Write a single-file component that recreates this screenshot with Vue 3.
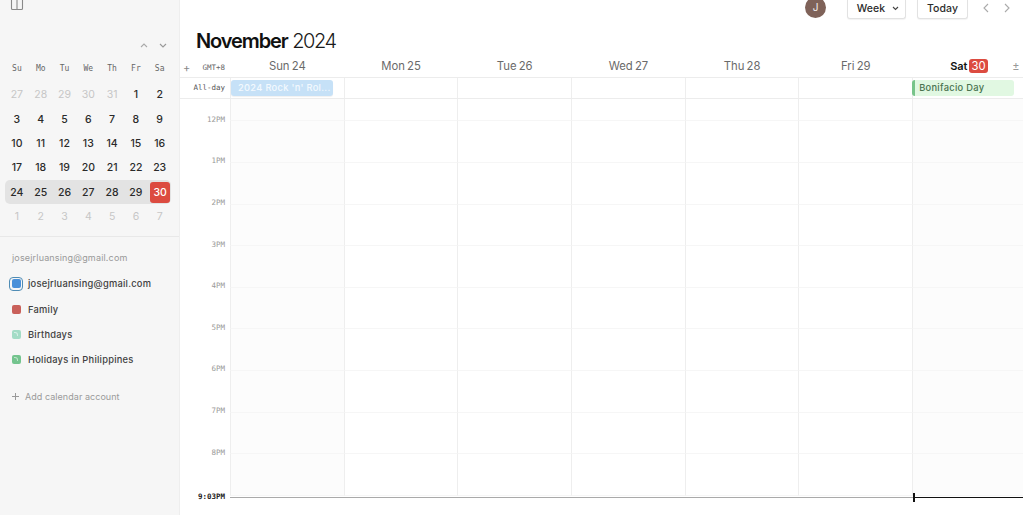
<script setup>
const dow = ['Su','Mo','Tu','We','Th','Fr','Sa']
const weeks = [
  [27,28,29,30,31,1,2],[3,4,5,6,7,8,9],[10,11,12,13,14,15,16],[17,18,19,20,21,22,23],[24,25,26,27,28,29,30],[1,2,3,4,5,6,7]
]
const isMuted = (w, d) => (w === 0 && d > 20) || (w === 5)
const days = ['Sun 24','Mon 25','Tue 26','Wed 27','Thu 28','Fri 29']
const hours = ['12PM','1PM','2PM','3PM','4PM','5PM','6PM','7PM','8PM','']
const cals = [
  { name: 'Family', color: '#c9605a', cls: '' },
  { name: 'Birthdays', color: '#a3dcc6', cls: 'feed' },
  { name: 'Holidays in Philippines', color: '#74c48e', cls: 'feed' }
]
</script>

<template>
  <div class="app">
    <aside class="side">
      <div class="side-top">
        <svg width="14" height="12" viewBox="0 0 14 12" fill="none" stroke="#8a8a8a" stroke-width="1.1">
          <path d="M1.5 -2H12.5V8.5a1 1 0 0 1-1 1H2.5a1 1 0 0 1-1-1Z" />
          <path d="M7 -2V9.5" />
        </svg>
      </div>
      <div class="arrows">
        <svg width="8" height="5" viewBox="0 0 8 5" fill="none" stroke="#aaa" stroke-width="1.1"><path d="M1 4l3-3 3 3" /></svg>
        <svg width="8" height="5" viewBox="0 0 8 5" fill="none" stroke="#999" stroke-width="1.1"><path d="M1 1l3 3 3-3" /></svg>
      </div>
      <div class="dow">
        <span v-for="d in dow" :key="d">{{ d }}</span>
      </div>
      <div class="weeks">
        <div v-for="(w, wi) in weeks" :key="wi" class="week" :class="{ current: wi === 4 }">
          <span
            v-for="(d, di) in w"
            :key="di"
            class="date"
            :class="{ muted: isMuted(wi, d), today: wi === 4 && di === 6 }"
          >{{ d }}</span>
        </div>
      </div>
      <div class="accounts">
        <div class="acct-label">josejrluansing@gmail.com</div>
        <div class="cal">
          <span class="swatch-ring"><i></i></span>
          <span class="cal-name">josejrluansing@gmail.com</span>
        </div>
        <div v-for="c in cals" :key="c.name" class="cal">
          <span class="swatch-box"><i :class="c.cls" :style="{ background: c.color }"></i></span>
          <span class="cal-name">{{ c.name }}</span>
        </div>
        <div class="add">
          <svg width="7" height="7" viewBox="0 0 7 7" stroke="#999" stroke-width="1"><path d="M3.5 0v7M0 3.5h7" /></svg>
          <span>Add calendar account</span>
        </div>
      </div>
    </aside>

    <main class="main">
      <div class="topbar">
        <span class="avatar">J</span>
        <button class="btn week-btn">Week
          <svg width="7" height="5" viewBox="0 0 7 5" fill="none" stroke="#444" stroke-width="1.1"><path d="M1 1l2.5 2.5L6 1" /></svg>
        </button>
        <button class="btn today-btn">Today</button>
        <div class="nav">
          <svg width="6" height="10" viewBox="0 0 6 10" fill="none" stroke="#aaa" stroke-width="1.1"><path d="M5 1L1 5l4 4" /></svg>
          <svg width="6" height="10" viewBox="0 0 6 10" fill="none" stroke="#aaa" stroke-width="1.1"><path d="M1 1l4 4-4 4" /></svg>
        </div>
      </div>

      <h1 class="title"><b>November</b> <span class="year">2024</span></h1>

      <div class="row head">
        <div class="gutter head-gutter">
          <span class="plus">+</span><span>GMT+8</span>
        </div>
        <div v-for="d in days" :key="d" class="day">{{ d }}</div>
        <div class="day sat">
          <b>Sat</b><span class="badge">30</span><span class="pm">±</span>
        </div>
      </div>

      <div class="row allday">
        <div class="gutter">All-day</div>
        <div class="cell"><span class="event rock">2024 Rock 'n' Rol...</span></div>
        <div v-for="n in 5" :key="n" class="cell"></div>
        <div class="cell"><span class="event boni">Bonifacio Day</span></div>
      </div>

      <div class="grid">
        <div v-for="(h, i) in hours" :key="i" class="row hour">
          <div class="gutter"><span class="hour-label">{{ h }}</span></div>
          <div class="cell weekend"></div>
          <div v-for="n in 5" :key="n" class="cell"></div>
          <div class="cell weekend"></div>
        </div>
        <div class="now">
          <span class="now-label">9:03PM</span>
          <span class="now-line"></span>
          <span class="now-today"></span>
        </div>
      </div>
    </main>
  </div>
</template>

<style>
html, body { margin: 0; overflow: hidden; background: #fff; }
</style>

<style scoped>
.app {
  display: flex;
  width: 1023px;
  height: 515px;
  overflow: hidden;
  font-family: "Inter", "Liberation Sans", sans-serif;
  color: #333;
  background: #fff;
}
.side {
  width: 179px;
  flex: none;
  background: #f6f6f6;
  border-right: 1px solid #eeeeee;
}
.side-top { height: 38px; padding-left: 10px; }
.side-top svg { display: block; }
.arrows {
  display: flex;
  justify-content: flex-end;
  gap: 11px;
  padding-right: 12px;
  height: 18px;
  align-items: center;
  margin-top: -2px;
}
.dow, .week {
  display: grid;
  grid-template-columns: repeat(7, 23.8px);
  padding-left: 5px;
  text-align: center;
}
.dow {
  font-family: "DejaVu Sans Mono", monospace;
  font-size: 8px;
  line-height: 14px;
  color: #666;
  margin-top: 8px;
  margin-bottom: 7px;
}
.week {
  height: 24.3px;
  align-items: center;
  font-size: 10.5px;
  font-weight: 500;
  color: #2a2a2a;
}
.week.current {
  background: #e3e3e3;
  border-radius: 5px;
  margin-left: 5px;
  padding-left: 0;
  width: 166px;
}
.date { display: block; line-height: 21.5px; }
.muted { color: #c6c6c6; font-weight: 400; }
.today {
  background: #dc4b40;
  color: #fff;
  border-radius: 3px;
  width: 20px;
  justify-self: center;
  margin-left: 1px;
}
.accounts {
  border-top: 1px solid #e8e8e8;
  margin-top: 7px;
  padding-top: 15px;
}
.acct-label {
  font-size: 9px;
  letter-spacing: 0.17px;
  color: #999;
  padding-left: 12px;
  line-height: 12px;
  margin-bottom: 7.6px;
}
.cal {
  display: flex;
  align-items: center;
  height: 25.2px;
  padding-left: 9px;
  font-size: 9.3px;
  font-weight: 500;
  letter-spacing: 0.25px;
  color: #404040;
}
.swatch-ring, .swatch-box {
  width: 14px;
  height: 14px;
  display: flex;
  align-items: center;
  justify-content: center;
  margin-right: 5px;
  flex: none;
}
.swatch-ring {
  border: 1.5px solid #4f8cb5;
  border-radius: 4px;
  box-sizing: border-box;
}
.swatch-ring i { width: 9px; height: 9px; background: #4a90d9; border-radius: 2px; display: block; }
.swatch-box i { width: 9px; height: 9px; border-radius: 2px; display: block; position: relative; }
.feed::after {
  content: "";
  position: absolute;
  left: 2px;
  top: 2px;
  width: 3px;
  height: 3px;
  border-top: 1px solid rgba(255,255,255,.55);
  border-right: 1px solid rgba(255,255,255,.55);
  border-radius: 0 3px 0 0;
}
.add {
  display: flex;
  align-items: center;
  gap: 6px;
  padding-left: 12px;
  margin-top: 18.4px;
  font-size: 9px;
  letter-spacing: 0.05px;
  color: #9a9a9a;
  line-height: 12px;
}

.main { flex: 1; min-width: 0; display: flex; flex-direction: column; overflow: hidden; }
.topbar {
  height: 19px;
  display: flex;
  align-items: flex-end;
  flex: none;
  padding-left: 625px;
}
.avatar {
  width: 21px;
  height: 21px;
  border-radius: 50%;
  background: #7f6259;
  color: #f4eeee;
  font-size: 10px;
  text-align: center;
  line-height: 20px;
  flex: none;
  margin-bottom: 1px;
  margin-right: 21px;
}
.btn {
  font-family: inherit;
  font-size: 10.5px;
  font-weight: 500;
  color: #2c2c2c;
  background: #fff;
  border: 1px solid #e2e2e2;
  border-top: 0;
  border-radius: 0 0 3px 3px;
  box-shadow: 0 1px 1px rgba(0,0,0,.05);
  height: 19px;
  padding: 0 0 2px;
  flex: none;
  letter-spacing: .1px;
}
.week-btn { width: 59px; margin-right: 11px; padding-left: 3px; }
.week-btn svg { margin-left: 4px; vertical-align: 1px; }
.today-btn { width: 51px; }
.nav { display: flex; gap: 15px; align-self: center; margin-left: 15px; margin-top: -3px; }
.nav svg { display: block; }

.title {
  margin: 0;
  height: 39px;
  flex: none;
  padding: 8px 0 0 16px;
  box-sizing: border-box;
  font-size: 20px;
  line-height: 28px;
  font-weight: 300;
  color: #1a1a1a;
  white-space: nowrap;
}
.title b { font-weight: 600; letter-spacing: -1.1px; color: #111; }
.year { letter-spacing: -1.45px; margin-left: -1px; }

.row {
  display: grid;
  grid-template-columns: 50px repeat(7, 113.7px);
  flex: none;
}
.gutter { text-align: right; }
.head { height: 20px; border-bottom: 1px solid #ececec; box-sizing: border-box; align-items: start; }
.head-gutter {
  display: flex;
  justify-content: space-between;
  align-items: center;
  font-family: "DejaVu Sans Mono", monospace;
  font-size: 7.5px;
  color: #666;
  padding: 0 5px 0 3px;
  box-sizing: border-box;
  height: 19px;
}
.plus { font-family: "Inter", sans-serif; font-size: 11px; color: #888; }
.day {
  text-align: center;
  font-size: 11.3px;
  line-height: 17px;
  color: #6a6a6a;
  white-space: nowrap;
  word-spacing: -1px;
  padding-left: 1px;
}
.sat {
  position: relative;
  text-align: left;
  padding-left: 38px;
  color: #111;
  display: flex;
  align-items: center;
  height: 17px;
  font-size: 11px;
}
.sat b { font-weight: 600; }
.badge {
  background: #dc4b40;
  color: #fff;
  border-radius: 3px;
  font-size: 11.3px;
  line-height: 14px;
  height: 14px;
  padding: 0 2px;
  margin-left: 2px;
  margin-top: -2px;
}
.pm { position: absolute; left: 100px; top: 0; color: #999; font-size: 11px; }

.allday { height: 21px; border-bottom: 1px solid #ececec; box-sizing: border-box; }
.allday .gutter {
  font-family: "DejaVu Sans Mono", monospace;
  font-size: 7.5px;
  color: #555;
  line-height: 20px;
  padding-right: 5px;
}
.cell { border-left: 1px solid #eeeeee; box-sizing: border-box; min-width: 0; }
.event {
  display: block;
  width: 102px;
  height: 16px;
  line-height: 15px;
  margin-top: 2px;
  font-size: 9.3px;
  white-space: nowrap;
  overflow: hidden;
  border-radius: 3px;
  box-sizing: border-box;
}
.rock {
  background: #c6e1f7;
  color: #f3f9fe;
  padding-left: 7px;
  letter-spacing: .3px;
  font-weight: 500;
  box-shadow: 0 1px 1px rgba(0,0,0,.06);
}
.boni {
  background: #e1f8e2;
  color: #4a7350;
  border-left: 3px solid #77c48a;
  padding-left: 4px;
  margin-left: -1px;
  font-weight: 500;
  letter-spacing: .3px;
}

.grid { position: relative; flex: 1; }
.hour { height: 41.6px; }
.hour:first-child { height: 22.4px; }
.hour .gutter { position: relative; }
.hour-label {
  position: absolute;
  right: 5px;
  bottom: -3.5px;
  font-family: "DejaVu Sans Mono", monospace;
  font-size: 7.5px;
  line-height: 10px;
  color: #999;
}
.hour .cell { border-bottom: 1px solid #f6f6f6; }
.weekend { background: #fcfcfc; }
.now { position: absolute; left: 0; right: 0; top: 397.5px; height: 1px; }
.now-label {
  position: absolute;
  right: 798px;
  top: -5px;
  font-family: "DejaVu Sans Mono", monospace;
  font-size: 7.5px;
  font-weight: 700;
  line-height: 10px;
  color: #222;
}
.now-line { position: absolute; left: 50px; width: 683px; top: 0; height: 1px; background: #aaa; }
.now-today { position: absolute; left: 733px; right: 0; top: 0; height: 1.5px; background: #111; }
.now-today::before {
  content: "";
  position: absolute;
  left: 0;
  top: -4px;
  width: 2px;
  height: 9px;
  background: #111;
}
</style>
